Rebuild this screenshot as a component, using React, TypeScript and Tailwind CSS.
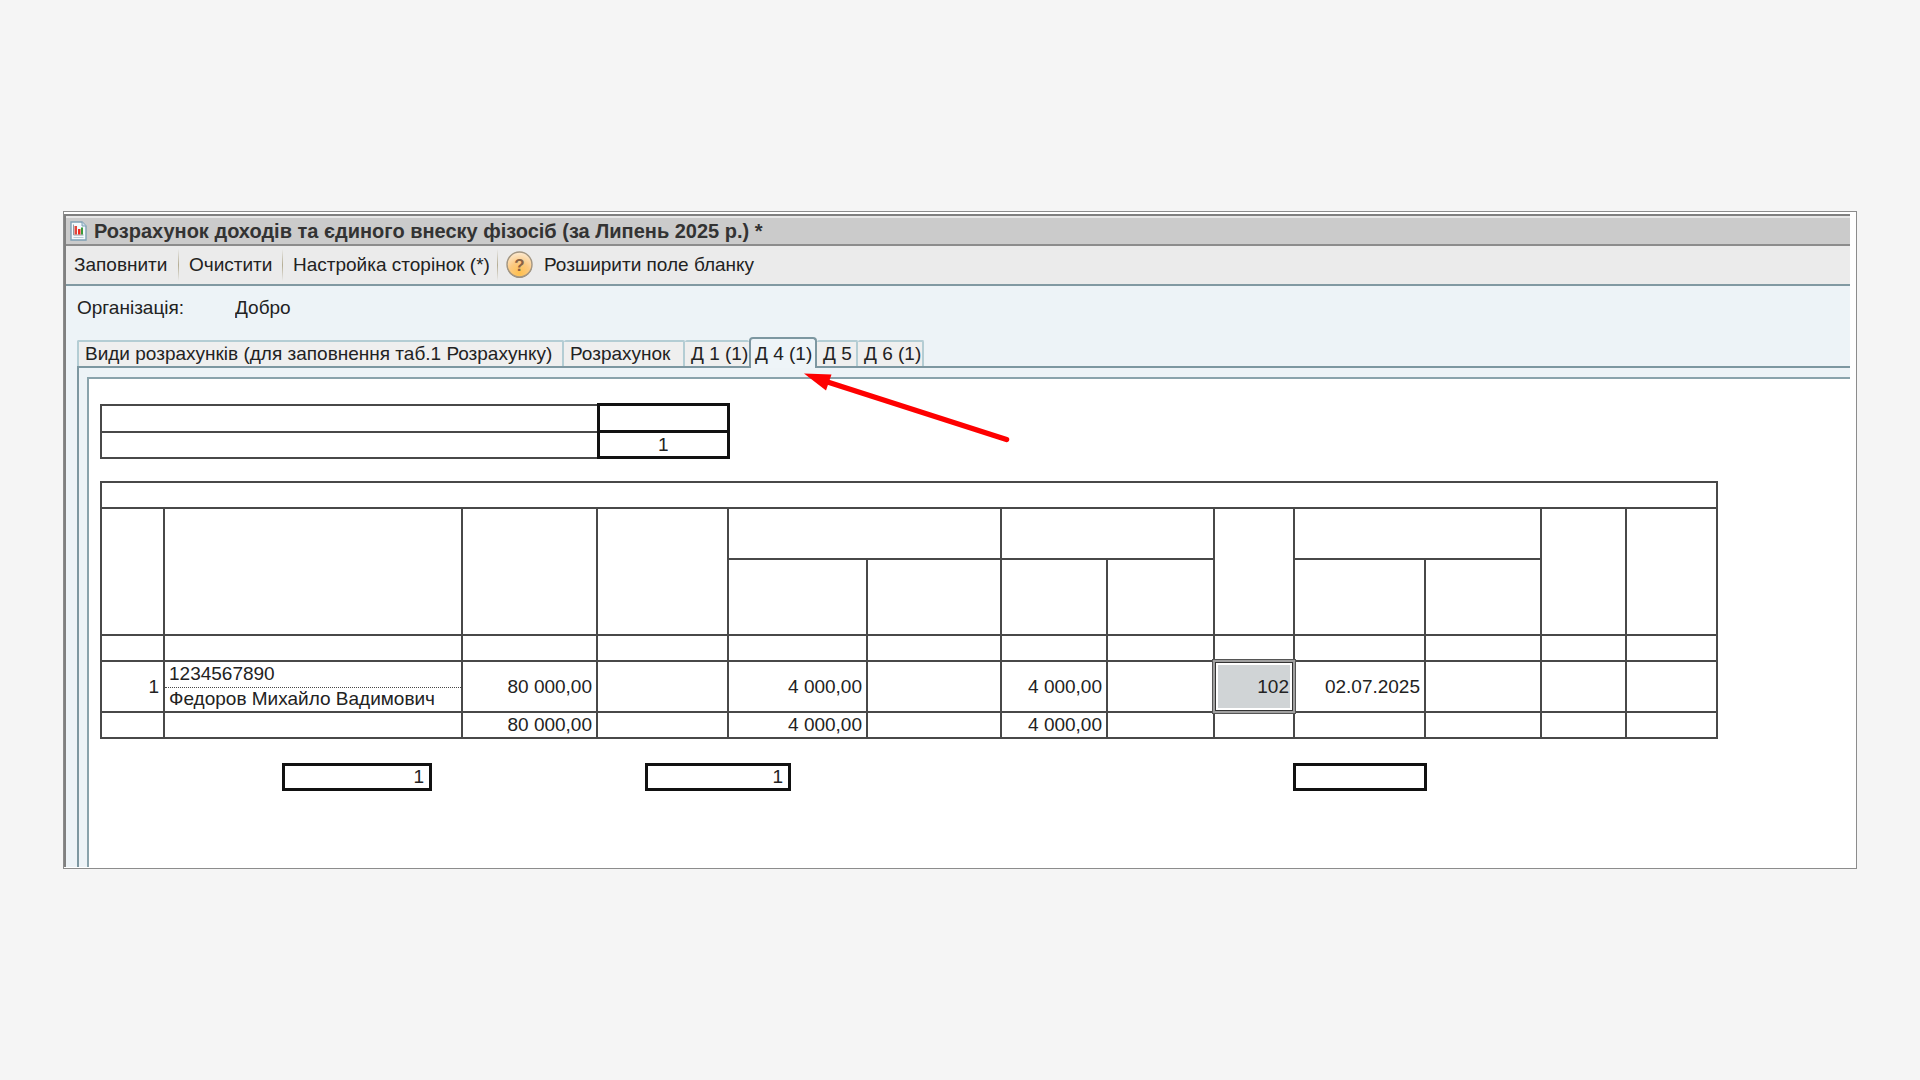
import React from "react";
import clsx from "clsx";

const tabs = [
  { title: "Види розрахунків (для заповнення таб.1 Розрахунку)", width: "w-[487px]" },
  { title: "Розрахунок", width: "w-[121px]" },
  { title: "Д 1 (1)", width: "w-[64px]" },
  { title: "Д 4 (1)", width: "w-[68px]", active: true },
  { title: "Д 5", width: "w-[41px]" },
  { title: "Д 6 (1)", width: "w-[66px]" },
];

const columns = [
  "w-[63px]",
  "w-[298px]",
  "w-[135px]",
  "w-[131px]",
  "w-[139px]",
  "w-[134px]",
  "w-[106px]",
  "w-[107px]",
  "w-[80px]",
  "w-[131px]",
  "w-[116px]",
  "w-[85px]",
  "w-[91px]",
];

const cell = "border-2 border-[#484848] p-0";
const numCell = "border-2 border-[#484848] py-0 pl-0 pr-1 text-right";
const boldCell = "border-3 border-[#111] p-0 text-center";
const totalBox =
  "h-7 border-3 border-[#111] bg-white pr-[5px] text-right text-[19px] leading-5 text-[#222] outline-none";

function ReportIcon() {
  return (
    <svg width="17" height="20" viewBox="0 0 17 20" aria-hidden="true">
      <path d="M1 1h11l4 4v14H1z" fill="#f4f9fc" stroke="#7fa0b4" strokeWidth="1.4" />
      <path d="M12 1v4h4" fill="#cfe0ea" stroke="#7fa0b4" strokeWidth="1" />
      <path d="M3.5 3.5v10.500h10" fill="none" stroke="#8d9ba5" strokeWidth="1" />
      <path d="M4.500 5h2.500v8.500H4.500z" fill="#e0463c" />
      <path d="M8 8h2.500v5.500H8z" fill="#f02a20" />
      <path d="M11 6.500h2v7h-2z" fill="#3c9a3a" />
      <path d="M3.500 16.500h10" stroke="#b9cbd6" strokeWidth="1" />
    </svg>
  );
}

function HelpIcon() {
  return (
    <svg width="27" height="28" viewBox="0 0 27 28" aria-hidden="true">
      <defs>
        <radialGradient id="help" cx="0.5" cy="0.85" r="0.85">
          <stop offset="0" stopColor="#ffc04d" />
          <stop offset="0.5" stopColor="#fbc981" />
          <stop offset="1" stopColor="#fdebd3" />
        </radialGradient>
      </defs>
      <circle cx="13.5" cy="14.500" r="12.500" fill="#8b8378" />
      <circle cx="13.500" cy="13.500" r="12.500" fill="url(#help)" stroke="#a39682" strokeWidth="1.400" />
      <text x="13.500" y="19.500" textAnchor="middle" fontSize="17" fontWeight="bold" fill="#8a6244">
        ?
      </text>
    </svg>
  );
}

function Separator() {
  return (
    <span className="ml-1 mr-[2px] h-8 w-px shrink-0 bg-linear-to-b from-[#ebebeb] via-[#b5ad94] to-[#ebebeb]" />
  );
}

function Arrow() {
  return (
    <svg
      className="pointer-events-none absolute left-[723px] top-[3px] z-20"
      width="210"
      height="76"
      viewBox="0 0 210 76"
      aria-hidden="true"
    >
      <path d="M24 10.500L204.500 68.500" stroke="#fe0000" strokeWidth="5.500" strokeLinecap="round" />
      <path d="M2 2.500L29.500 3.500L24 19.500z" fill="#fe0000" />
    </svg>
  );
}

function Toolbar() {
  return (
    <div className="flex h-[38px] items-center bg-[#ebebeb]">
      <button type="button" className="w-[108px] pl-2 text-left">Заповнити</button>
      <Separator />
      <button type="button" className="w-[97px] pl-2 text-left">Очистити</button>
      <Separator />
      <button type="button" className="w-[208px] pl-2 text-left">Настройка сторінок (*)</button>
      <Separator />
      <button type="button" aria-label="Довідка" className="w-9 pl-1.5">
        <HelpIcon />
      </button>
      <button type="button" className="pl-2 text-left">Розширити поле бланку</button>
    </div>
  );
}

function Tabs() {
  return (
    <div role="tablist" className="relative z-10 flex h-[29px] items-end">
      {tabs.map((tab, i) => (
        <button
          key={tab.title}
          type="button"
          role="tab"
          aria-selected={!!tab.active}
          className={clsx(
            "shrink-0 whitespace-nowrap text-left leading-6",
            tab.width,
            tab.active
              ? "-mb-[2px] h-[31px] rounded-t-sm border-x-2 border-t-2 border-[#7d97a1] bg-[#eef4f8] pl-1"
              : "h-[26px] rounded-t-xs border-t-2 border-[#b4cdd4] bg-[#efefef] pl-1.5",
            !tab.active && i !== 2 && "border-r-2",
            i === 0 && "border-l-2"
          )}
        >
          {tab.title}
        </button>
      ))}
    </div>
  );
}

function CodeTable() {
  return (
    <table className="w-[630px] table-fixed border-collapse">
      <colgroup>
        <col className="w-[497px]" />
        <col />
      </colgroup>
      <tbody>
        <tr className="h-[27px]">
          <td className={cell}></td>
          <td className={boldCell}></td>
        </tr>
        <tr className="h-[26px]">
          <td className={cell}></td>
          <td className={boldCell}>1</td>
        </tr>
      </tbody>
    </table>
  );
}

function IncomeTable() {
  return (
    <table className="mt-[22px] w-[1618px] table-fixed border-collapse">
      <colgroup>
        {columns.map((width, i) => (
          <col key={i} className={width} />
        ))}
      </colgroup>
      <thead>
        <tr className="h-[26px]">
          <td colSpan={13} className={cell}></td>
        </tr>
        <tr className="h-[51px]">
          <td rowSpan={2} className={cell}></td>
          <td rowSpan={2} className={cell}></td>
          <td rowSpan={2} className={cell}></td>
          <td rowSpan={2} className={cell}></td>
          <td colSpan={2} className={cell}></td>
          <td colSpan={2} className={cell}></td>
          <td rowSpan={2} className={cell}></td>
          <td colSpan={2} className={cell}></td>
          <td rowSpan={2} className={cell}></td>
          <td rowSpan={2} className={cell}></td>
        </tr>
        <tr className="h-[76px]">
          {[4, 5, 6, 7, 9, 10].map((i) => (
            <td key={i} className={cell}></td>
          ))}
        </tr>
        <tr className="h-[26px]">
          {columns.map((_, i) => (
            <td key={i} className={cell}></td>
          ))}
        </tr>
      </thead>
      <tbody>
        <tr className="h-[26px]">
          <td rowSpan={2} className={numCell}>1</td>
          <td className="border-x-2 border-b border-t-2 border-[#484848] py-0 pl-1 pr-0 [border-bottom-style:dotted]">
            1234567890
          </td>
          <td rowSpan={2} className={numCell}>80 000,00</td>
          <td rowSpan={2} className={cell}></td>
          <td rowSpan={2} className={numCell}>4 000,00</td>
          <td rowSpan={2} className={cell}></td>
          <td rowSpan={2} className={numCell}>4 000,00</td>
          <td rowSpan={2} className={cell}></td>
          <td rowSpan={2} className={clsx(numCell, "relative")}>
            {/* selected cell */}
            <span className="absolute -inset-[3px] bg-[#d0d4d6] shadow-[inset_0_0_0_1px_#555,inset_0_0_0_3px_#a0a0a0,inset_0_0_0_4px_#333,inset_0_0_0_6px_#fff]" />
            <span className="relative">102</span>
          </td>
          <td rowSpan={2} className={numCell}>02.07.2025</td>
          <td rowSpan={2} className={cell}></td>
          <td rowSpan={2} className={cell}></td>
          <td rowSpan={2} className={cell}></td>
        </tr>
        <tr className="h-[25px]">
          <td className="border-x-2 border-b-2 border-[#484848] py-0 pl-1 pr-0">Федоров Михайло Вадимович</td>
        </tr>
        <tr className="h-[26px]">
          <td className={cell}></td>
          <td className={cell}></td>
          <td className={numCell}>80 000,00</td>
          <td className={cell}></td>
          <td className={numCell}>4 000,00</td>
          <td className={cell}></td>
          <td className={numCell}>4 000,00</td>
          {[7, 8, 9, 10, 11, 12].map((i) => (
            <td key={i} className={cell}></td>
          ))}
        </tr>
      </tbody>
    </table>
  );
}

export default function App() {
  return (
    <div className='flex min-h-screen items-center bg-[#f5f5f5] px-[63px] font-["Liberation_Sans",Arial,sans-serif] text-[19px] leading-5 text-[#222]'>
      <div className="min-w-0 flex-1 overflow-hidden border border-[#8c8c8c] bg-white pb-px pr-[6px] pt-[2px]">
        <div className="border-l-2 border-t-2 border-[#808080]">
          <header className="flex h-[30px] items-center border-y-2 border-b-[#8c8c8c] border-t-[#e8e8e8] bg-[#cbcbcb] pl-1">
            <ReportIcon />
            <h1 className="ml-[7px] text-[20px] font-bold text-[#333]">
              Розрахунок доходів та єдиного внеску фізосіб (за Липень 2025 р.) *
            </h1>
          </header>
          <Toolbar />
          <main className="border-t-2 border-[#8199a2] bg-[#edf3f7] pl-[11px] pt-2.5">
            <div className="flex h-6 items-center">
              <label htmlFor="organization" className="w-[158px]">Організація:</label>
              <input id="organization" readOnly value="Добро" className="w-60 bg-transparent outline-none" />
            </div>
            <div className="mt-[17px]">
              <Tabs />
              <div className="relative border-l-2 border-t-2 border-[#7d97a1] pl-2 pt-[9px]">
                <Arrow />
                <div className="overflow-hidden border-l-2 border-t-2 border-[#8aa3ac] bg-white pb-[76px] pl-[11px] pt-6">
                  <CodeTable />
                  <IncomeTable />
                  <div className="mt-6 flex">
                    <input aria-label="Кількість рядків" defaultValue="1" className={clsx(totalBox, "ml-[182px] w-[150px]")} />
                    <input aria-label="Кількість осіб" defaultValue="1" className={clsx(totalBox, "ml-[213px] w-[146px]")} />
                    <input aria-label="Дата" defaultValue="" className={clsx(totalBox, "ml-[502px] w-[134px]")} />
                  </div>
                </div>
              </div>
            </div>
          </main>
        </div>
      </div>
    </div>
  );
}
